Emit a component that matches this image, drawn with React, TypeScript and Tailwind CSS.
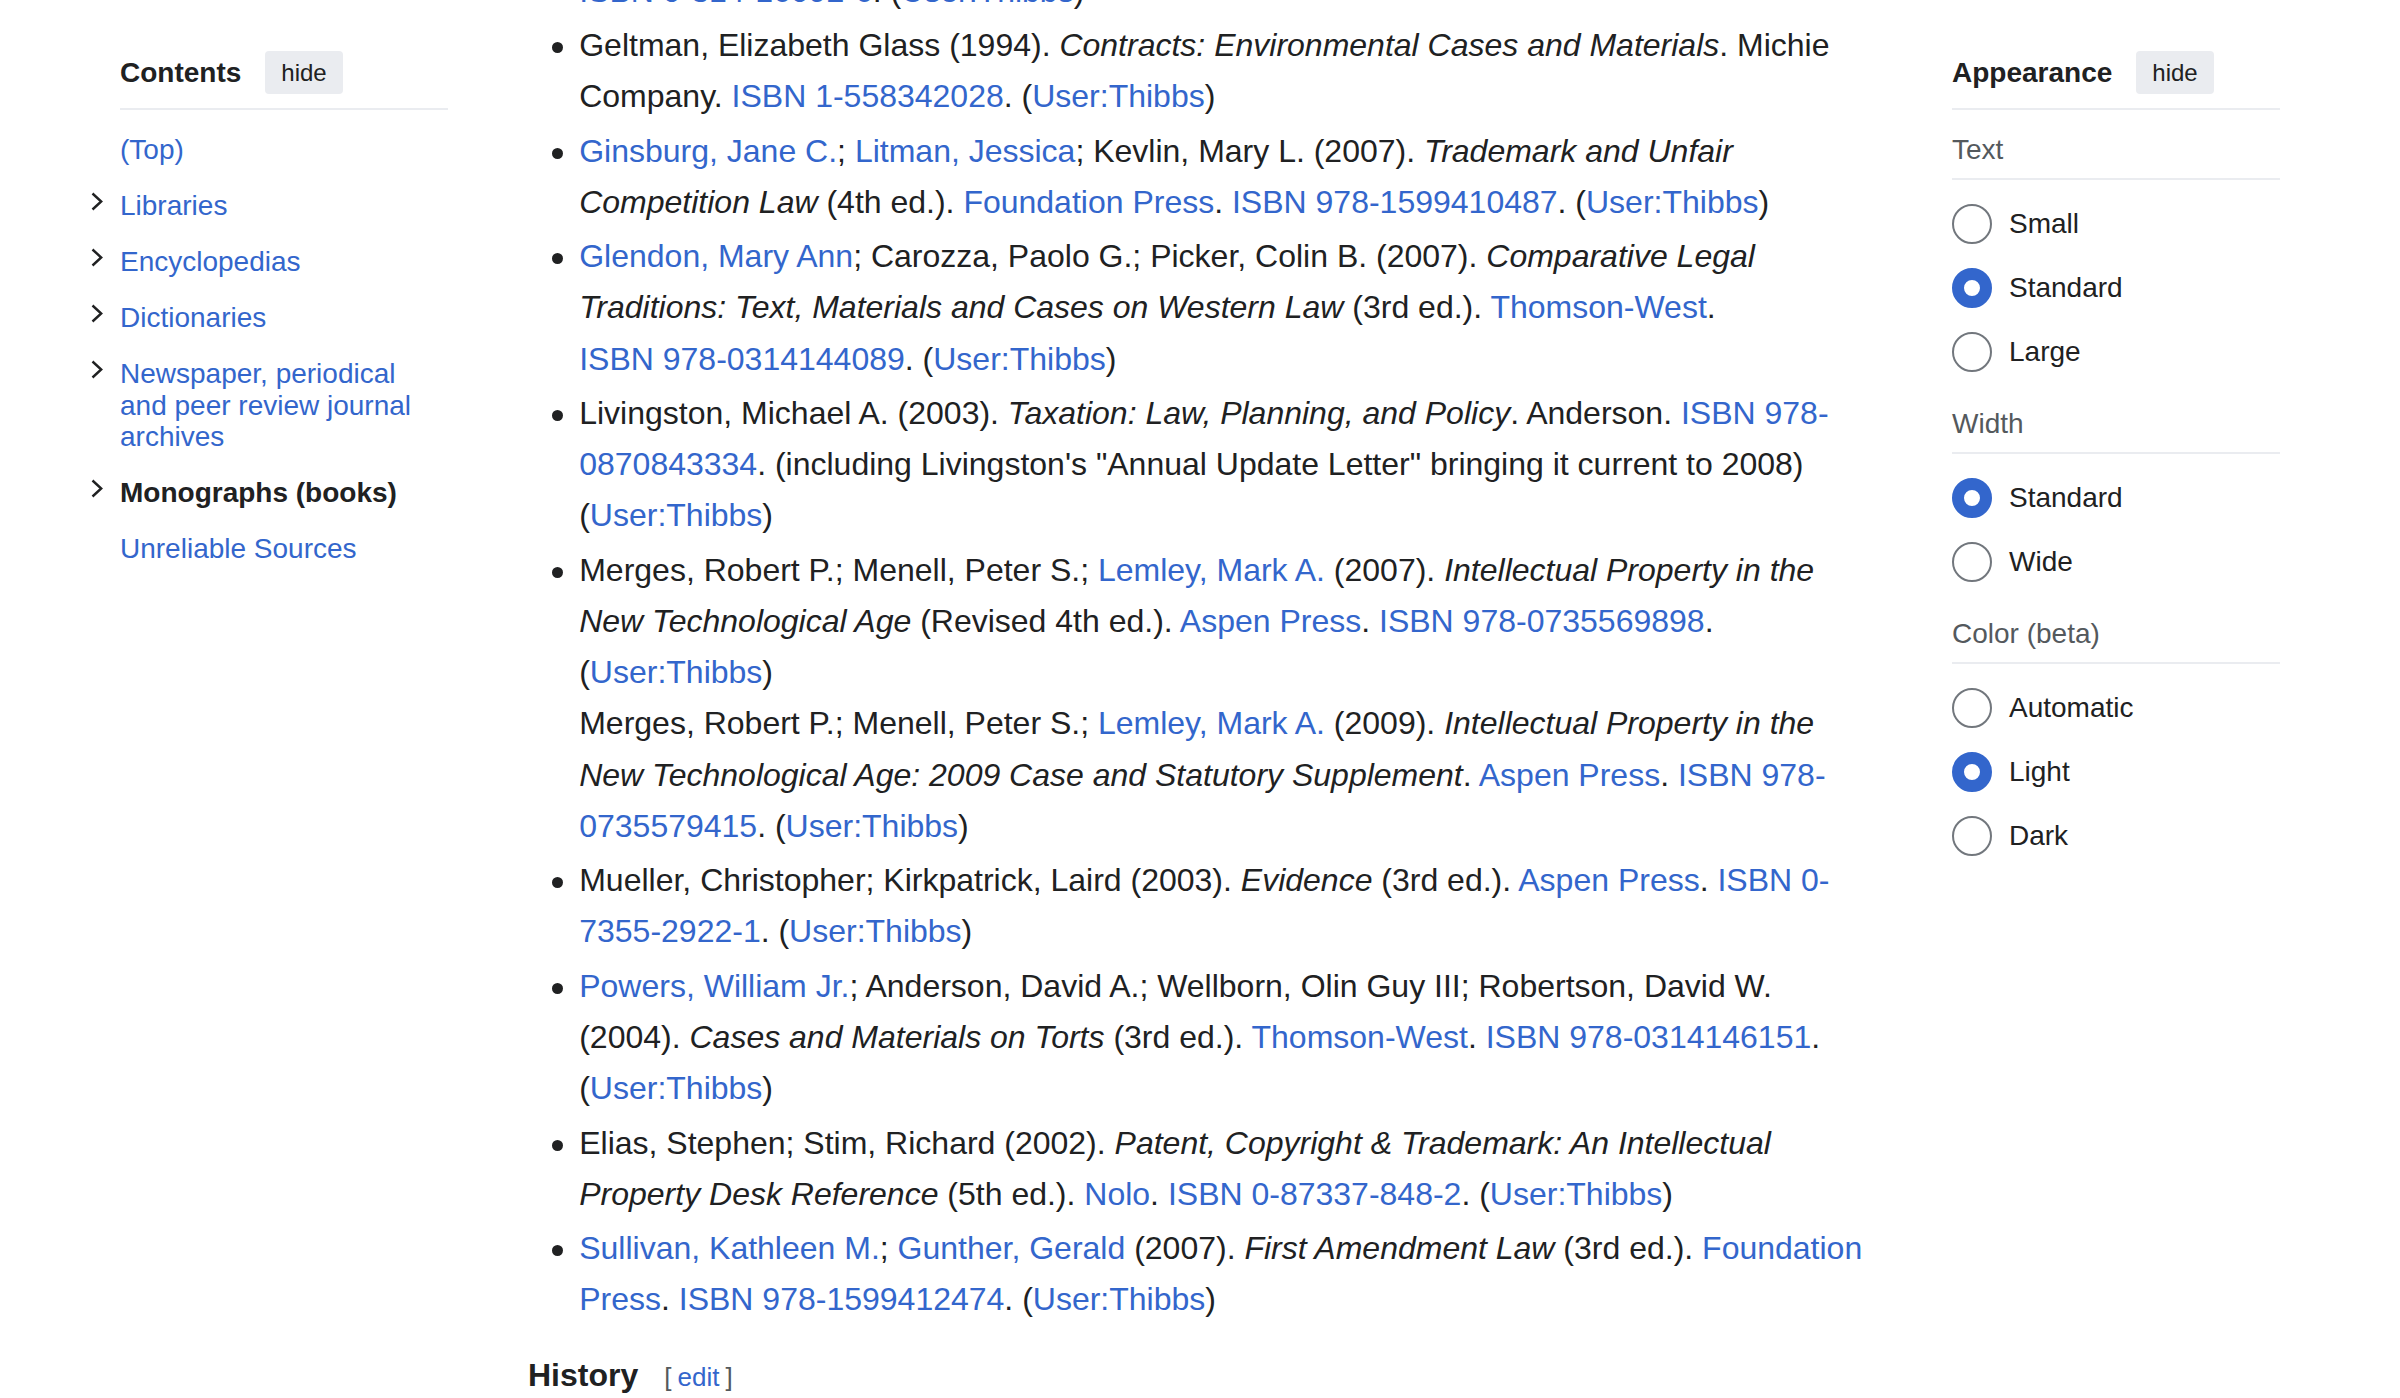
// Wikipedia-style reading view: contents sidebar, book list, appearance panel

const font = "font-['Liberation_Sans',Arial,Helvetica,sans-serif]";

function A({ children }: { children: React.ReactNode }) {
  return <a className="text-[#3366cc]">{children}</a>;
}

function Chevron() {
  return (
    <svg width="12" height="19" viewBox="0 0 12 19" fill="none">
      <path d="M1.5 1.5 L10.2 9.5 L1.5 17.5" stroke="#202122" strokeWidth="2.4" />
    </svg>
  );
}

function HideButton() {
  return (
    <button className="h-[43px] px-4 rounded-[4px] bg-[#eaecf0] text-[24px] text-[#202122] leading-none">
      hide
    </button>
  );
}

const toc = [
  { label: '(Top)', toggle: false },
  { label: 'Libraries', toggle: true },
  { label: 'Encyclopedias', toggle: true },
  { label: 'Dictionaries', toggle: true },
  { label: 'Newspaper, periodical and peer review journal archives', toggle: true },
  { label: 'Monographs (books)', toggle: true, active: true },
  { label: 'Unreliable Sources', toggle: false },
];

function Contents() {
  return (
    <nav className="w-[328px] shrink-0 pt-[51px]">
      <div className="flex items-center gap-6 pb-[14px] border-b-2 border-[#eaecf0]">
        <h2 className="text-[28px] font-bold text-[#202122]">Contents</h2>
        <HideButton />
      </div>
      <ul className="mt-3 -ml-[29px]">
        {toc.map((item) => (
          <li key={item.label} className="flex">
            <div className="w-[29px] shrink-0 pt-[14px]">{item.toggle && <Chevron />}</div>
            <div
              className={
                'flex-1 py-[12.25px] text-[28px] leading-[31.5px] ' +
                (item.active ? 'font-bold text-[#202122]' : 'text-[#3366cc]')
              }
            >
              {item.label}
            </div>
          </li>
        ))}
      </ul>
    </nav>
  );
}

function Item({ children }: { children: React.ReactNode }) {
  return (
    <li className="flex mb-[3.2px]">
      <div className="w-[51.2px] shrink-0 pt-[22px] pl-[24px]">
        <div className="w-[11px] h-[11px] rounded-full bg-[#202122]" />
      </div>
      <div className="flex-1">{children}</div>
    </li>
  );
}

const nb = '\u00a0';

function Books() {
  return (
    <main className="w-[1344px] shrink-0 ml-[80px] text-[32px] leading-[51.2px] text-[#202122]">
      <ul className="-mt-[34.4px]">
        <li className="pl-[51.2px] mb-[3.2px]">
          <A>ISBN{nb}0-314-16092-6</A>. (<A>User:Thibbs</A>)
        </li>
        <Item>
          Geltman, Elizabeth Glass (1994). <i>Contracts: Environmental Cases and Materials</i>. Michie
          Company. <A>ISBN{nb}1-558342028</A>. (<A>User:Thibbs</A>)
        </Item>
        <Item>
          <A>Ginsburg, Jane C.</A>; <A>Litman, Jessica</A>; Kevlin, Mary L. (2007).{' '}
          <i>Trademark and Unfair Competition Law</i> (4th ed.). <A>Foundation Press</A>.{' '}
          <A>ISBN{nb}978-1599410487</A>. (<A>User:Thibbs</A>)
        </Item>
        <Item>
          <A>Glendon, Mary Ann</A>; Carozza, Paolo G.; Picker, Colin B. (2007).{' '}
          <i>Comparative Legal Traditions: Text, Materials and Cases on Western Law</i> (3rd ed.).{' '}
          <A>Thomson-West</A>. <A>ISBN{nb}978-0314144089</A>. (<A>User:Thibbs</A>)
        </Item>
        <Item>
          Livingston, Michael A. (2003). <i>Taxation: Law, Planning, and Policy</i>. Anderson.{' '}
          <A>
            ISBN{nb}978-<wbr />0870843334
          </A>
          . (including Livingston's "Annual Update Letter" bringing it current to 2008) (
          <A>User:Thibbs</A>)
        </Item>
        <Item>
          Merges, Robert P.; Menell, Peter S.; <A>Lemley, Mark A.</A> (2007).{' '}
          <i>Intellectual Property in the New Technological Age</i> (Revised 4th ed.).{' '}
          <A>Aspen Press</A>. <A>ISBN{nb}978-0735569898</A>. (<A>User:Thibbs</A>)
          <br />
          Merges, Robert P.; Menell, Peter S.; <A>Lemley, Mark A.</A> (2009).{' '}
          <i>Intellectual Property in the New Technological Age: 2009 Case and Statutory Supplement</i>.{' '}
          <A>Aspen Press</A>.{' '}
          <A>
            ISBN{nb}978-<wbr />0735579415
          </A>
          . (<A>User:Thibbs</A>)
        </Item>
        <Item>
          Mueller, Christopher; Kirkpatrick, Laird (2003). <i>Evidence</i> (3rd ed.). <A>Aspen Press</A>.{' '}
          <A>
            ISBN{nb}0-<wbr />7355-2922-1
          </A>
          . (<A>User:Thibbs</A>)
        </Item>
        <Item>
          <A>Powers, William Jr.</A>; Anderson, David A.; Wellborn, Olin Guy III; Robertson, David W.
          (2004). <i>Cases and Materials on Torts</i> (3rd ed.). <A>Thomson-West</A>.{' '}
          <A>ISBN{nb}978-0314146151</A>. (<A>User:Thibbs</A>)
        </Item>
        <Item>
          Elias, Stephen; Stim, Richard (2002).{' '}
          <i>Patent, Copyright &amp; Trademark: An Intellectual Property Desk Reference</i> (5th ed.).{' '}
          <A>Nolo</A>. <A>ISBN{nb}0-87337-848-2</A>. (<A>User:Thibbs</A>)
        </Item>
        <Item>
          <A>Sullivan, Kathleen M.</A>; <A>Gunther, Gerald</A> (2007). <i>First Amendment Law</i> (3rd
          ed.). <A>Foundation Press</A>. <A>ISBN{nb}978-1599412474</A>. (<A>User:Thibbs</A>)
        </Item>
      </ul>
      <div className="mt-[24px] flex items-baseline">
        <h3 className="text-[32px] font-bold leading-[51.2px] text-[#202122]">History</h3>
        <span className="ml-[26px] text-[26px] text-[#54595d]">
          <span className="mr-[6px]">[</span>
          <A>edit</A>
          <span className="ml-[6px]">]</span>
        </span>
      </div>
    </main>
  );
}

function Radio({ label, checked = false }: { label: string; checked?: boolean }) {
  return (
    <div className="flex items-center gap-[17px] h-16">
      <div
        className={
          'w-10 h-10 rounded-full bg-white ' +
          (checked ? 'border-[12px] border-[#3366cc]' : 'border-2 border-[#72777d]')
        }
      />
      <span className="text-[28px] text-[#202122]">{label}</span>
    </div>
  );
}

function Section({ title, options, value }: { title: string; options: string[]; value: string }) {
  return (
    <div>
      <div className="pt-6 pb-3 border-b-2 border-[#eaecf0] text-[28px] leading-[32px] text-[#54595d]">
        {title}
      </div>
      <div className="pt-3">
        {options.map((o) => (
          <Radio key={o} label={o} checked={o === value} />
        ))}
      </div>
    </div>
  );
}

function Appearance() {
  return (
    <aside className="w-[328px] shrink-0 ml-[80px] pt-[51px]">
      <div className="flex items-center gap-6 pb-[14px] border-b-2 border-[#eaecf0]">
        <h2 className="text-[28px] font-bold text-[#202122]">Appearance</h2>
        <HideButton />
      </div>
      <Section title="Text" options={['Small', 'Standard', 'Large']} value="Standard" />
      <Section title="Width" options={['Standard', 'Wide']} value="Standard" />
      <Section title="Color (beta)" options={['Automatic', 'Light', 'Dark']} value="Light" />
    </aside>
  );
}

export default function App() {
  return (
    <div className={'w-[2400px] h-[1398px] overflow-hidden bg-white flex px-[120px] ' + font}>
      <Contents />
      <Books />
      <Appearance />
    </div>
  );
}
